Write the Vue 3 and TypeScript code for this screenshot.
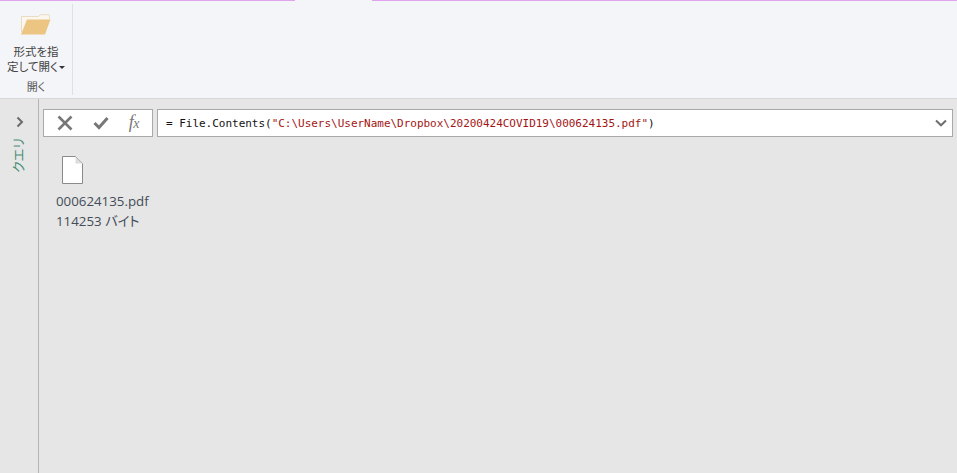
<script setup lang="ts">
const formulaPrefix: string = '= File.Contents('
const formulaString: string = '"C:\\Users\\UserName\\Dropbox\\20200424COVID19\\000624135.pdf"'
</script>

<template>
  <div class="app">
    <header class="ribbon">
      <div class="tabline">
        <div class="line line-left"></div>
        <div class="line-gap"></div>
        <div class="line line-right"></div>
      </div>
      <div class="ribbon-body">
        <section class="group">
          <div class="group-main">
            <svg class="folder" width="32" height="24" viewBox="0 0 32 24">
              <path d="M1.500 20V4.500h17l2-1.800h7.500q1.500 0 1.500 1.500V7" fill="#fbf7ef" stroke="#e9dcc4" stroke-width="1"/>
              <path d="M7 7.500h23.500L25 22.500H1z" fill="#ecc583"/>
            </svg>
            <div class="big-label">形式を指<br />定して開く<span class="caret"></span></div>
          </div>
          <div class="group-name">開く</div>
        </section>
      </div>
    </header>
    <div class="workspace">
      <aside class="sidebar">
        <svg class="chevron" width="8" height="12" viewBox="0 0 8 12">
          <path d="M1.500 1.500 6 6l-4.500 4.500" fill="none" stroke="#6b6b6b" stroke-width="2"/>
        </svg>
        <div class="query-label">クエリ</div>
      </aside>
      <main class="content">
        <div class="formula-row">
          <div class="tools">
            <svg width="16" height="16" viewBox="0 0 16 16">
              <path d="M1.500 1.500 14.500 14.500M14.500 1.500 1.500 14.500" stroke="#777" stroke-width="2.600" fill="none"/>
            </svg>
            <svg width="16" height="14" viewBox="0 0 16 14">
              <path d="M1.500 7 6 11.500 14.500 2" stroke="#777" stroke-width="3" fill="none"/>
            </svg>
            <span class="fx"><i>f</i><i class="x">x</i></span>
          </div>
          <div class="formula">
            <code class="formula-text">{{ formulaPrefix }}<span class="str">{{ formulaString }}</span>)</code>
            <svg class="expand" width="12" height="8" viewBox="0 0 12 8">
              <path d="M1 1.500 6 6.300l5-4.800" fill="none" stroke="#6e6e6e" stroke-width="2"/>
            </svg>
          </div>
        </div>
        <div class="file">
          <svg class="doc" width="21" height="28" viewBox="0 0 21 28">
            <path d="M.5.500h13L20.500 7.500v20H.5z" fill="#fff" stroke="#8a8a8a" stroke-width="1"/>
            <path d="M13.500.5v7h7z" fill="#dcdcdc"/>
          </svg>
          <div class="file-name">000624135.pdf</div>
          <div class="file-size">114253 バイト</div>
        </div>
      </main>
    </div>
  </div>
</template>

<style>
html, body { margin: 0; padding: 0; }
</style>

<style scoped>
.app {
  width: 957px;
  height: 473px;
  display: flex;
  flex-direction: column;
  overflow: hidden;
  background: #e6e6e6;
  font-family: "Open Sans", "Noto Sans CJK JP", sans-serif;
}
.ribbon {
  height: 99px;
  box-sizing: border-box;
  background: #f4f5f8;
  border-bottom: 1px solid #d6d6d6;
  flex: none;
  display: flex;
  flex-direction: column;
}
.tabline { display: flex; height: 2px; flex: none; }
.line { background: #e0a4ee; height: 1px; }
.line-left { width: 295px; }
.line-gap { width: 77px; }
.line-right { flex: 1; }
.ribbon-body { flex: 1; display: flex; padding-top: 2px; }
.group {
  width: 72px;
  height: 91px;
  border-right: 1px solid #dfe0e3;
  display: flex;
  flex-direction: column;
  align-items: center;
}
.group-main {
  flex: 1;
  display: flex;
  flex-direction: column;
  align-items: center;
}
.folder { margin-top: 8px; }
.big-label {
  margin-top: 8px;
  font-family: "Noto Sans CJK JP", sans-serif;
  font-feature-settings: "palt";
  font-size: 11.500px;
  line-height: 15px;
  color: #444;
  text-align: center;
  white-space: nowrap;
}
.caret {
  display: inline-block;
  width: 0;
  height: 0;
  margin-left: 1px;
  vertical-align: 2px;
  border-left: 3px solid transparent;
  border-right: 3px solid transparent;
  border-top: 3px solid #333;
}
.group-name {
  font-family: "Noto Sans CJK JP", sans-serif;
  font-feature-settings: "palt";
  font-size: 11px;
  line-height: 15px;
  color: #555;
  margin-bottom: 1px;
}
.workspace { flex: 1; display: flex; min-height: 0; }
.sidebar {
  width: 38px;
  flex: none;
  border-right: 1px solid #b4b4b4;
  display: flex;
  flex-direction: column;
  align-items: center;
  padding-top: 17px;
}
.chevron { margin-left: 2px; }
.query-label {
  margin-top: 10px;
  margin-right: 2px;
  writing-mode: vertical-rl;
  text-orientation: sideways;
  transform: rotate(180deg);
  font-family: "Noto Sans CJK JP", sans-serif;
  font-feature-settings: "palt";
  font-size: 13px;
  line-height: 14px;
  color: #4a8f78;
}
.content { flex: 1; min-width: 0; padding: 10px 4px 0; }
.formula-row { display: flex; gap: 4px; height: 28px; }
.tools {
  width: 110px;
  box-sizing: border-box;
  background: #fff;
  border: 1px solid #a9a9a9;
  display: flex;
  align-items: center;
  justify-content: space-between;
  padding: 0 13px 0 13px;
}
.fx {
  font-family: "Liberation Serif", serif;
  font-size: 18px;
  color: #777;
  line-height: 1;
  margin-top: -2px;
  letter-spacing: -0.5px;
}
.fx .x { font-size: 14px; }
.formula {
  flex: 1;
  box-sizing: border-box;
  background: #fff;
  border: 1px solid #a9a9a9;
  display: flex;
  align-items: center;
  justify-content: space-between;
  padding: 0 5px 0 8px;
}
.formula-text {
  font-family: "DejaVu Sans Mono", monospace;
  font-size: 11px;
  letter-spacing: -0.02px;
  color: #111;
  white-space: pre;
}
.str { color: #a31515; }
.file { margin: 19px 0 0 13px; }
.doc { display: block; margin-left: 6px; }
.file-name, .file-size {
  font-size: 13.300px;
  line-height: 20px;
  color: #444c58;
  font-feature-settings: "palt";
}
.file-name { margin-top: 7px; }
</style>
